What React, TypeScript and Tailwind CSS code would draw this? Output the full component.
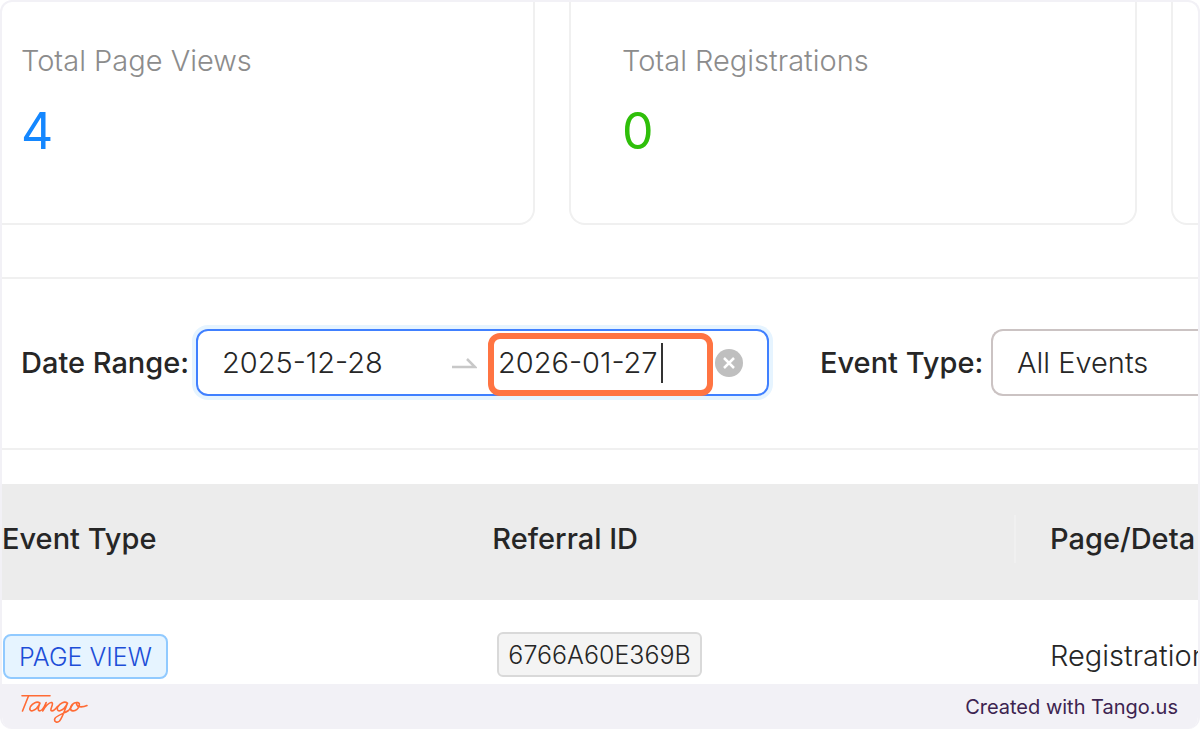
import { useState } from 'react';

const stats = [
  { label: 'Total Page Views', value: 4, color: 'text-[#1487ff]', card: 'rounded-br-2xl border-r-2 pl-[19px]' },
  { label: 'Total Registrations', value: 0, color: 'text-[#2fbf0a]', card: 'rounded-b-2xl border-x-2 pl-[51px]' },
];

const rows = [{ type: 'PAGE VIEW', referralId: '6766A60E369B', page: 'Registration' }];

function TangoLogo() {
  return (
    <svg
      viewBox="0 0 70 32"
      className="h-8 w-[70px]"
      fill="none"
      stroke="#ff6b35"
      strokeWidth="1.6"
      strokeLinecap="round"
      strokeLinejoin="round"
      role="img"
      aria-label="Tango"
    >
      <path d="M2 4.8H30" />
      <path d="M8.5 5L2.5 20" />
      <path d="M20 12.2C17 9.8 12.5 12 10.5 15.5C9 18.4 10.2 20.4 12.5 19.8C15.5 19 18.5 15.5 20 12.2C18.5 15.5 17.4 19.3 19.3 19.8C21.5 20.3 24.5 15.5 26.2 11.5L22.8 20C25 15.5 29.5 10.7 31.8 11.6C34.5 12.8 29 18.8 31.4 19.8C33.5 20.4 36 17.5 37.5 15.5" />
      <path d="M47.5 12.2C44.5 9.8 40 12 38 15.5C36.5 18.4 37.7 20.4 40 19.8C43 19 46 15.5 47.5 12.2C45 18 42.5 26.5 39.5 30C37.5 32 34 31.3 34.7 28C35.6 24.5 44 22.6 48.5 19.5C50.3 18 51 15.7 52.5 13.8" />
      <path d="M57 11.6C53.5 11.2 50.5 14.6 50.5 17.6C50.7 20.6 54.5 20.5 57 18.3C59.5 15.8 60.5 12.4 57.8 11.6C55.5 11.5 56.5 15.6 60 15.8C63 16 65.5 15.2 67 14.5" />
    </svg>
  );
}

export default function App() {
  const [startDate, setStartDate] = useState('2025-12-28');
  const [endDate, setEndDate] = useState('2026-01-27');

  return (
    <div className="overflow-hidden rounded-xl border-2 border-b-0 border-[#f2f1f6] bg-white font-['Inter',sans-serif] text-[29px] leading-8 text-[#262626]">
      {/* Stat cards */}
      <section className="grid grid-cols-[533fr_568fr_27fr] gap-[34px]">
        {stats.map((stat) => (
          <div key={stat.label} className={`border-b-2 border-[#f0f0f0] pt-[43px] pb-[62px] ${stat.card}`}>
            <p className="font-light text-[#8c8c8c]">{stat.label}</p>
            <p className={`mt-6 text-[50px] leading-[60px] ${stat.color}`}>{stat.value}</p>
          </div>
        ))}
        <div className="rounded-bl-2xl border-b-2 border-l-2 border-[#f0f0f0]" />
      </section>

      {/* Filters */}
      <section className="mt-[52px] flex items-center border-y-2 border-[#f0f0f0] pt-[50px] pb-[52px] pl-[19px]">
        <label htmlFor="start-date" className="w-[175px] shrink-0 font-medium whitespace-nowrap">
          Date Range:
        </label>
        <div className="flex h-[67px] min-w-0 flex-1 items-center rounded-xl border-2 border-[#4080ff] pl-6 shadow-[0_0_0_4px_#e6f4ff]">
          <input
            id="start-date"
            value={startDate}
            onChange={(e) => setStartDate(e.target.value)}
            className="h-8 w-[180px] min-w-0 flex-1 font-light outline-none"
          />
          <svg viewBox="0 0 26 14" className="mr-[11px] h-[14px] w-[26px] shrink-0" fill="none" stroke="#c8c8c8" strokeWidth="2.5">
            <path d="M1 11H24L16 3" />
          </svg>
          <div className="relative flex w-[225px] shrink-0">
            <input
              aria-label="End date"
              value={endDate}
              onChange={(e) => setEndDate(e.target.value)}
              className="h-8 w-full pl-[10px] font-light outline-none"
            />
            <span className="absolute -top-1 left-[173px] h-10 w-0.5 bg-[#333]" />
            <span className="pointer-events-none absolute inset-x-0 -top-[14px] h-[63px] rounded-xl border-6 border-[#ff7442]" />
          </div>
          <button type="button" aria-label="Clear dates" onClick={() => setEndDate('')} className="mr-6 ml-0.5 shrink-0">
            <svg viewBox="0 0 28 28" className="size-7">
              <circle cx="14" cy="14" r="14" fill="#bfbfbf" />
              <path d="M9 9L19 19M19 9L9 19" stroke="#fff" strokeWidth="2.5" />
            </svg>
          </button>
        </div>
        <label htmlFor="event-type" className="ml-[51px] w-[171px] shrink-0 font-medium whitespace-nowrap">
          Event Type:
        </label>
        <select
          id="event-type"
          className="h-[67px] w-[207px] shrink-0 appearance-none rounded-l-xl border-2 border-r-0 border-[#cbc3c3] pl-6 font-light"
        >
          <option>All Events</option>
        </select>
      </section>

      {/* Events table */}
      <table className="mt-[34px] w-full table-fixed text-left whitespace-nowrap">
        <colgroup>
          <col className="w-[41%]" />
          <col />
          <col className="w-[184px]" />
        </colgroup>
        <thead className="bg-[#ececec]">
          <tr className="h-[116px]">
            <th className="pb-1.5 font-medium">Event Type</th>
            <th className="pb-1.5 font-medium">Referral ID</th>
            <th className="pb-1.5">
              <div className="flex h-12 items-center border-l-2 border-[#f0f0f0] pl-[34px] font-medium">Page/Deta</div>
            </th>
          </tr>
        </thead>
        <tbody>
          {rows.map((row) => (
            <tr key={row.referralId} className="align-top">
              <td className="px-px pt-[34px] pb-[5px]">
                <span className="inline-flex h-[45px] items-center rounded-lg border-2 border-[#91caff] bg-[#e6f4ff] px-[14px] text-[25px] font-light text-[#1d4ed8]">
                  {row.type}
                </span>
              </td>
              <td className="px-[5px] pt-8 pb-[5px]">
                <code className="inline-flex h-[45px] items-center rounded-md border-2 border-[#d9d9d9] bg-[#f4f4f4] px-[9px] font-['Inter',sans-serif] text-[25px] font-light">
                  {row.referralId}
                </code>
              </td>
              <td className="overflow-hidden pt-10 pl-9 font-light">{row.page}</td>
            </tr>
          ))}
        </tbody>
      </table>

      <footer className="flex h-[45px] items-center justify-between bg-[#f2f1f6] pr-5 pl-[18px]">
        <TangoLogo />
        <span className="text-xl text-[#3d2450]">Created with Tango.us</span>
      </footer>
    </div>
  );
}
